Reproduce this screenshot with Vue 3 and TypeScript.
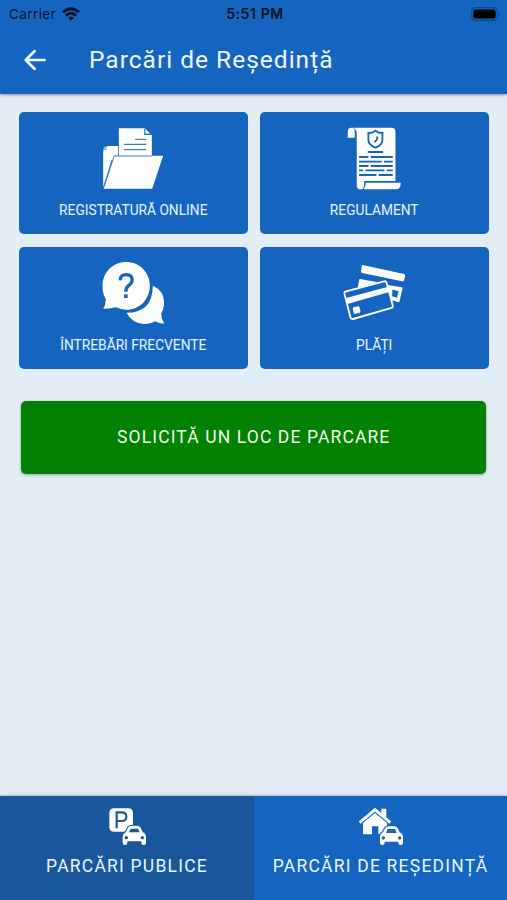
<script setup lang="ts">
interface Tile {
  id: string
  label: string
}

const tiles: Tile[] = [
  { id: 'registry', label: 'REGISTRATURĂ ONLINE' },
  { id: 'rules', label: 'REGULAMENT' },
  { id: 'faq', label: 'ÎNTREBĂRI FRECVENTE' },
  { id: 'payments', label: 'PLĂȚI' },
]
</script>

<template>
  <div class="screen">
    <header class="top">
      <div class="status">
        <div class="carrier">
          <span>Carrier</span>
          <svg class="wifi" viewBox="0 0 18 14" aria-hidden="true">
            <g fill="none" stroke="#071426" stroke-width="2.8">
              <path d="M1 5.2Q9-1.8 17 5.2" />
              <path d="M3.8 8.5Q9 4 14.2 8.5" />
            </g>
            <path d="M6 10.6Q9 8.2 12 10.6L9 13.7Z" fill="#071426" />
          </svg>
        </div>
        <span class="clock">5:51 PM</span>
        <div class="power">
          <svg class="battery" viewBox="0 0 30 14" aria-hidden="true">
            <rect x=".7" y=".7" width="25.6" height="12.6" rx="3.6" fill="none" stroke="#0d4688" stroke-width="1.2" />
            <rect x="2.4" y="2.4" width="22.2" height="9.2" rx="2" fill="#000" />
            <path d="M27.8 5Q30 7 27.8 9Z" fill="#0d4688" />
          </svg>
        </div>
      </div>
      <div class="bar">
        <button class="back" aria-label="Înapoi">
          <svg viewBox="0 0 22 20" aria-hidden="true">
            <path d="M20.6 10H2M10.7 1L1.7 10L10.7 19" fill="none" stroke="#f4f9ff" stroke-width="2.6" stroke-linecap="round" stroke-linejoin="round" />
          </svg>
        </button>
        <h1>Parcări de Reședință</h1>
      </div>
    </header>

    <main>
      <div class="grid">
        <button v-for="tile in tiles" :key="tile.id" class="tile">
          <svg v-if="tile.id === 'registry'" class="art" viewBox="-4.5 0 270 225" aria-hidden="true">
            <path d="M41 202V92L53 78H86V120H66Z" fill="#fff" />
            <path d="M43 80H51V91H41Z" fill="#8fb8e4" />
            <path d="M88 25H166L187 46V108H88Z" fill="#fff" />
            <path d="M166 26V43H186" fill="none" stroke="#1565c0" stroke-width="3.5" />
            <path d="M137 58H170M103 73H170M103 89H170" stroke="#1565c0" stroke-width="3" />
            <path d="M74 107H221L188 206H42Z" fill="#fff" />
            <path d="M44 200L74 108H187M87 80V107" fill="none" stroke="#3f80cb" stroke-width="3" />
          </svg>
          <svg v-else-if="tile.id === 'rules'" class="art" viewBox="-17.25 0 270 225" aria-hidden="true">
            <path d="M39 53V36Q39 23 50 23T60 36V53Z" fill="#fff" />
            <path d="M54 23H170Q182 23 182 36V183H88V194Q88 208 77 208T66 194V38Q65 27 54 23Z" fill="#fff" />
            <path d="M93 188H198Q198 208 183 208H87Q93 200 93 188Z" fill="#fff" />
            <path d="M122 32Q132 39 143 39V61Q142 75 122 83Q102 75 101 61V39Q112 39 122 32Z" fill="none" stroke="#1565c0" stroke-width="5.5" />
            <path d="M128 49L126 60L119 66" fill="none" stroke="#1565c0" stroke-width="5" />
            <path d="M99 96H145M73 111H101M108 111H174M73 125H141M148 125H174M73 138H101M108 138H174M73 151H85M92 151H149M156 151H174M73 165H125M132 165H174" stroke="#1565c0" stroke-width="5.5" />
          </svg>
          <svg v-else-if="tile.id === 'faq'" class="art" viewBox="-4.5 0 270 225" aria-hidden="true">
            <path d="M190 92Q224 107 224 144Q224 161 215 176Q216 193 224 206Q210 206 196 199Q183 207 163 207Q128 205 111 173Q145 174 168 155Q190 134 190 92Z" fill="#fff" />
            <path d="M110 21C150 21 181 52 181 92C181 133 150 164 110 164Q95 164 79 157Q61 162 41 161Q48 151 49 132Q39 117 39 92C39 52 71 21 110 21Z" fill="#fff" />
            <path d="M92 76Q93 59 110 59Q128 59 128 75Q128 84 118 91Q109 98 109 110" fill="none" stroke="#1565c0" stroke-width="10" />
            <rect x="103.5" y="118" width="11" height="11" fill="#1565c0" />
          </svg>
          <svg v-else class="art" viewBox="-17.25 0 270 225" aria-hidden="true">
            <path d="M84 30L208 57Q212 58 211 63L208 76Q207 80 202 79L82 54Q78 53 79 48L81 33Q81 30 84 30Z" fill="#fff" />
            <path d="M74 72L128 81L69 98Z" fill="#fff" />
            <path d="M158 90L201 97Q204 98 203 102L195 137Q194 142 189 141L171 136Z" fill="#fff" />
            <path d="M173 104L191 108L187 128L172 124Z" fill="#1565c0" />
            <path d="M34 109L148 79Q153 78 155 82L174 151Q175 157 170 159L55 192Q49 193 47 187L29 116Q28 111 34 109Z" fill="#1565c0" stroke="#fff" stroke-width="5.5" />
            <path d="M34 129L158 96L163 111L38 147Z" fill="#fff" />
            <path d="M54 160Q54 158 57 157L70 154Q73 153 74 156L77 168Q78 172 74 173L61 177Q58 177 57 174Z" fill="#fff" />
          </svg>
          <span class="label">{{ tile.label }}</span>
        </button>
      </div>
      <button class="request">SOLICITĂ UN LOC DE PARCARE</button>
    </main>

    <nav class="tabs">
      <button class="tab tab-public">
        <svg viewBox="291 48 180 120" aria-hidden="true">
          <rect x="328" y="55" width="71" height="70" rx="13" fill="#fff" />
          <path d="M350 115V67H365Q379 67 379 80T365 93H350" fill="none" stroke="#19569b" stroke-width="6.5" />
          <path d="M378 126L384 113Q387 107 395 107H411Q419 107 422 113L428 126Q438 131 438 141V158Q438 165 431 165T424 158V154H382V158Q382 165 375 165T368 158V141Q368 131 378 126Z" fill="#fff" stroke="#19569b" stroke-width="6" paint-order="stroke" />
          <path d="M387 127L392 116H414L419 127Z" fill="#19569b" />
          <circle cx="379" cy="143" r="5" fill="#19569b" />
          <circle cx="427" cy="143" r="5" fill="#19569b" />
        </svg>
        <span>PARCĂRI PUBLICE</span>
      </button>
      <button class="tab tab-home">
        <svg viewBox="291 48 180 120" aria-hidden="true">
          <path d="M382 56H397V87L382 74Z" fill="#fff" />
          <path d="M317 98L363 59L409 98" fill="none" stroke="#fff" stroke-width="8.5" />
          <path d="M327 99L363 69L399 99V133H373V109H354V133H327Z" fill="#fff" />
          <path d="M387 127L393 115Q396 109 404 109H420Q428 109 431 115L437 127Q447 132 447 142V159Q447 165 440 165T433 159V155H392V159Q392 165 385 165T378 159V142Q378 131 387 127Z" fill="#fff" stroke="#1565c0" stroke-width="7" paint-order="stroke" />
          <path d="M396 129L401 117H423L428 129Z" fill="#1565c0" />
          <circle cx="388" cy="144" r="5" fill="#1565c0" />
          <circle cx="437" cy="144" r="5" fill="#1565c0" />
        </svg>
        <span>PARCĂRI DE REȘEDINȚĂ</span>
      </button>
    </nav>
  </div>
</template>

<style>
body {
  margin: 0;
}
</style>

<style scoped>
.screen {
  width: 507px;
  height: 900px;
  display: flex;
  flex-direction: column;
  background: #e2edf5;
  font-family: Roboto, "Liberation Sans", sans-serif;
  overflow: hidden;
}

button {
  margin: 0;
  padding: 0;
  border: 0;
  font: inherit;
  color: #fff;
  background: none;
}

svg {
  display: block;
}

.top {
  height: 94px;
  flex: none;
  background: #1565c0;
  box-shadow: 0 1px 3px rgba(0, 0, 0, 0.4);
}

.status {
  height: 27px;
  display: grid;
  grid-template-columns: 1fr auto 1fr;
  align-items: center;
  padding: 0 6px 0 9px;
  color: #071426;
  font-family: Inter, sans-serif;
  font-size: 13.5px;
}

.carrier {
  display: flex;
  align-items: center;
  gap: 6px;
  letter-spacing: 0.4px;
}

.wifi {
  width: 18px;
  height: 14px;
}

.clock {
  font-weight: 600;
  font-size: 14px;
  letter-spacing: 0.6px;
}

.power {
  display: flex;
  justify-content: flex-end;
}

.battery {
  width: 30px;
  height: 14px;
}

.bar {
  height: 66px;
  display: flex;
  align-items: center;
  padding-left: 24px;
  gap: 43px;
}

.back svg {
  width: 22px;
  height: 20px;
}

h1 {
  margin: 0;
  color: #eef6ff;
  font-size: 24.5px;
  font-weight: 400;
  letter-spacing: 1px;
  line-height: 30px;
  white-space: nowrap;
}

main {
  flex: 1;
  padding: 18px 18.5px 0 19px;
}

.grid {
  display: grid;
  grid-template-columns: 1fr 1fr;
  grid-auto-rows: 122px;
  gap: 12.6px 12.4px;
}

.tile {
  display: flex;
  flex-direction: column;
  align-items: center;
  padding-top: 8px;
  border-radius: 5px;
  background: #1565c0;
}

.art {
  width: 90px;
  height: 75px;
}

.label {
  margin-top: 5px;
  color: #e8f3ff;
  font-size: 13.75px;
  line-height: 20px;
  white-space: nowrap;
}

.request {
  display: block;
  width: 465px;
  height: 73px;
  margin: 32px auto 0;
  border-radius: 5px;
  background: #028102;
  color: #effbe9;
  font-size: 17.5px;
  letter-spacing: 1.12px;
  box-shadow: 0 1px 3px rgba(0, 0, 0, 0.35);
}

.tabs {
  height: 104px;
  flex: none;
  display: grid;
  grid-template-columns: 254px 253px;
  box-shadow: 0 -1px 2px rgba(21, 70, 120, 0.3);
}

.tab {
  display: flex;
  flex-direction: column;
  align-items: center;
  padding-top: 10px;
  font-size: 17.5px;
  letter-spacing: 1.22px;
  white-space: nowrap;
}

.tab svg {
  width: 60px;
  height: 40px;
}

.tab span {
  margin-top: 9px;
  line-height: 22px;
  color: #eaf4ff;
}

.tab-public {
  background: #19569b;
}

.tab-home {
  background: #1565c0;
}
</style>
